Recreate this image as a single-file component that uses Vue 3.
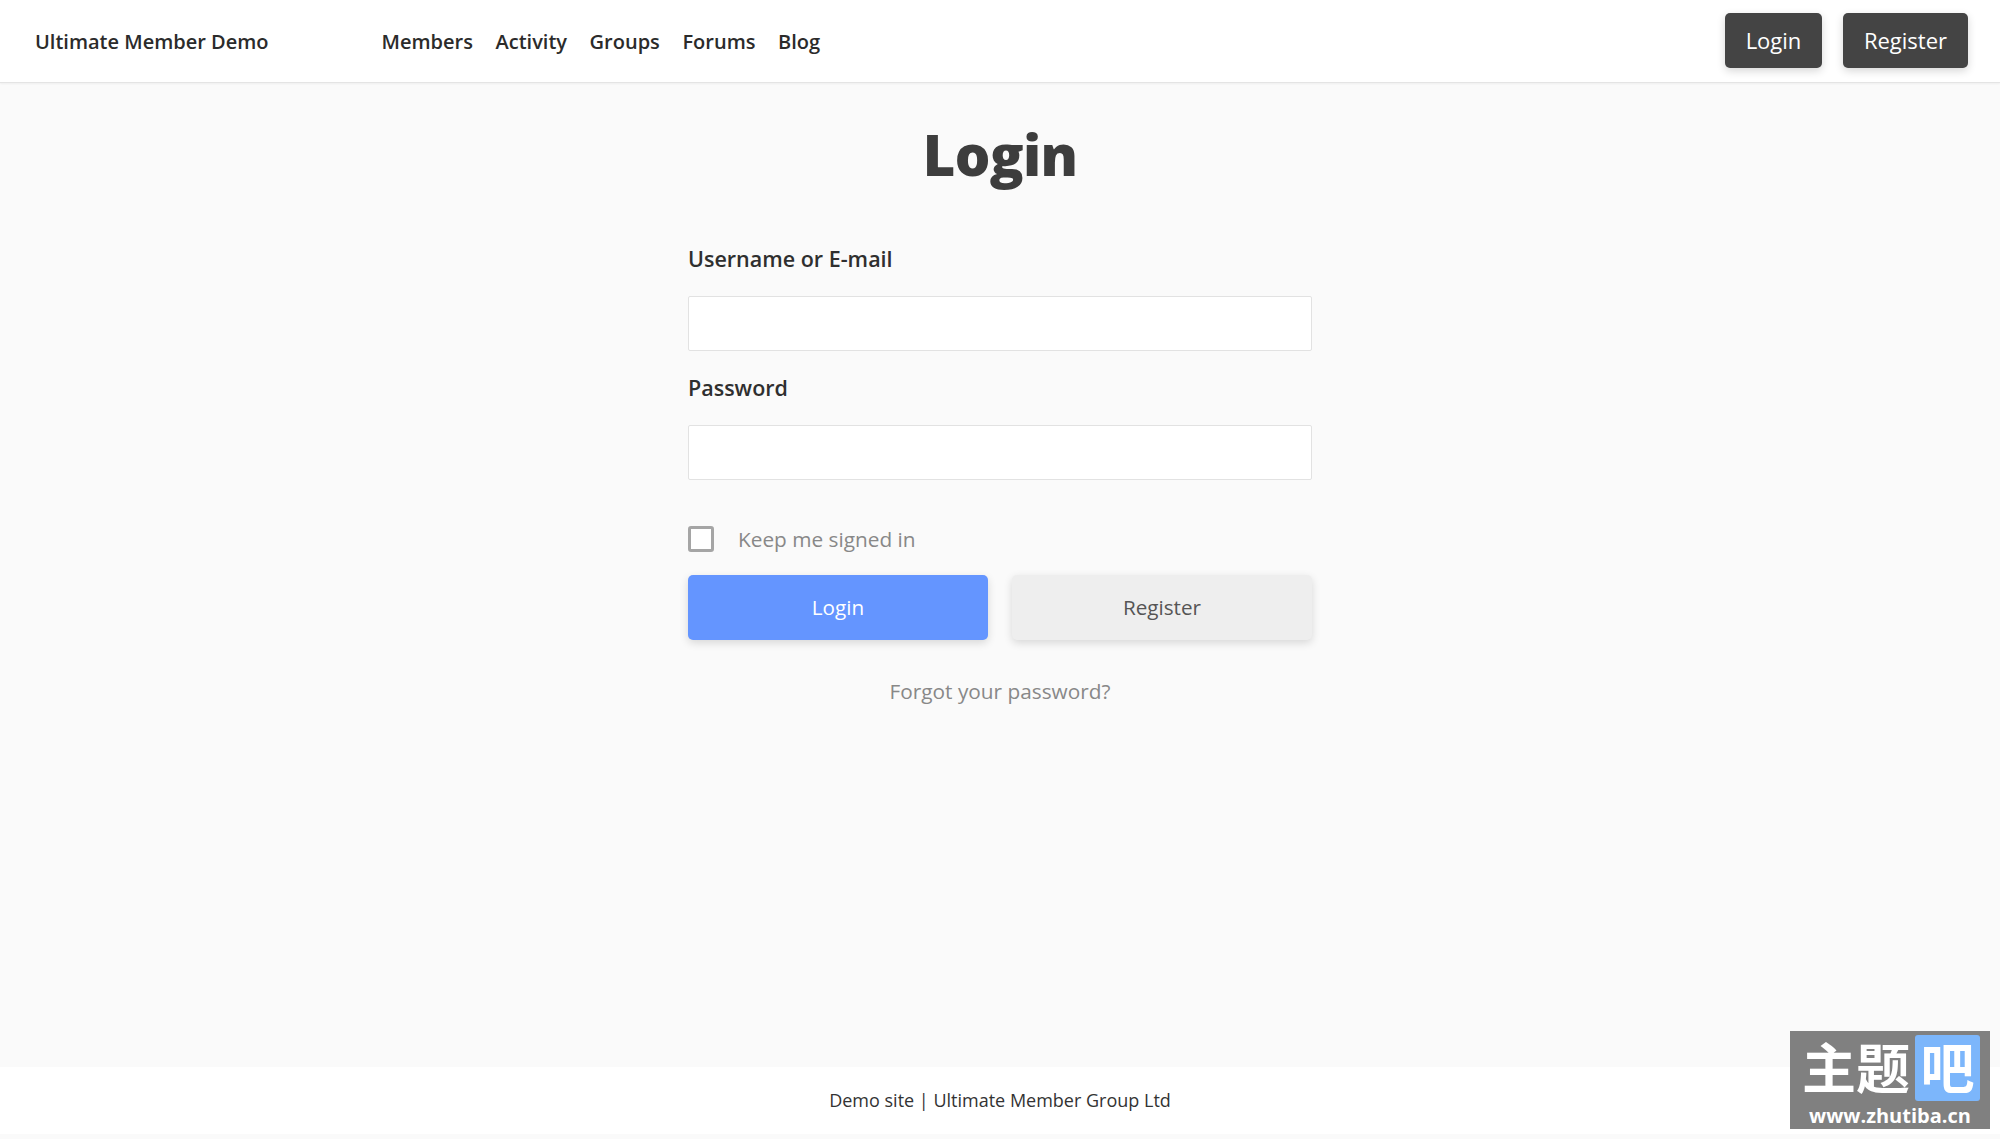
<script setup>
const links = ['Members', 'Activity', 'Groups', 'Forums', 'Blog']
</script>

<template>
  <div class="page">
    <header class="topbar">
      <div class="brand">Ultimate Member Demo</div>
      <nav class="nav">
        <a v-for="l in links" :key="l" class="nav-link">{{ l }}</a>
      </nav>
      <div class="actions">
        <button class="dark-btn login-btn">Login</button>
        <button class="dark-btn reg-btn">Register</button>
      </div>
    </header>
    <main class="main">
      <h1 class="title">Login</h1>
      <form class="form" @submit.prevent>
        <label class="label">Username or E-mail</label>
        <input class="input" type="text" />
        <label class="label second">Password</label>
        <input class="input" type="password" />
        <div class="keep">
          <span class="check"></span>
          <span>Keep me signed in</span>
        </div>
        <div class="btns">
          <button class="btn primary">Login</button>
          <button class="btn secondary">Register</button>
        </div>
        <div class="forgot">Forgot your password?</div>
      </form>
    </main>
    <footer class="footer">Demo site | Ultimate Member Group Ltd</footer>
    <div class="mark">
      <div class="mark-top">
        <span class="mark-cn">主题</span>
        <span class="mark-box">吧</span>
      </div>
      <div class="mark-url">www.zhutiba.cn</div>
    </div>
  </div>
</template>

<style>
html, body { margin: 0; background: #fafafa; }
</style>

<style scoped>
.page {
  position: relative;
  height: 1139px;
  display: flex;
  flex-direction: column;
  overflow: hidden;
  background: #fafafa;
  font-family: "Open Sans", "Noto Sans", sans-serif;
}
.topbar {
  box-sizing: border-box;
  height: 83px;
  flex: none;
  display: flex;
  align-items: center;
  padding: 0 32px 0 35px;
  background: #fff;
  border-bottom: 1px solid #e4e4e4;
  box-shadow: 0 1px 2px rgba(0, 0, 0, 0.05);
}
.brand {
  width: 346.5px;
  font-size: 20px;
  font-weight: 600;
  color: #2b2b2b;
}
.nav { display: flex; gap: 22.6px; }
.nav-link {
  font-size: 20px;
  font-weight: 600;
  color: #2b2b2b;
}
.actions { margin-left: auto; display: flex; gap: 21px; margin-bottom: 1px; }
.dark-btn {
  box-sizing: border-box;
  height: 55px;
  border: 0;
  border-radius: 5px;
  background: #444;
  color: #fff;
  font: 400 22px "Open Sans", sans-serif;
  box-shadow: 0 3px 8px rgba(0, 0, 0, 0.16);
  padding: 0 0 2px;
}
.login-btn { width: 97px; }
.reg-btn { width: 125px; }
.main {
  flex: 1;
  display: flex;
  flex-direction: column;
  align-items: center;
}
.title {
  margin: 27px 0 0;
  height: 88px;
  line-height: 88px;
  font-size: 56px;
  font-weight: 800;
  color: #3d3d3d;
  letter-spacing: -0.7px;
}
.form {
  width: 624px;
  margin-top: 47px;
  display: flex;
  flex-direction: column;
}
.label {
  height: 28px;
  line-height: 28px;
  font-size: 21.5px;
  font-weight: 600;
  color: #2f2f2f;
  margin-bottom: 23px;
}
.label.second { margin-top: 23px; }
.input {
  box-sizing: border-box;
  width: 100%;
  height: 55px;
  margin: 0;
  border: 1px solid #e2e2e2;
  border-radius: 2px;
  background: #fff;
  outline: none;
}
.keep {
  margin-top: 45px;
  height: 28px;
  display: flex;
  align-items: center;
  gap: 24px;
  font-size: 20.8px;
  color: #888;
}
.check {
  box-sizing: border-box;
  width: 26px;
  height: 26px;
  border: 3px solid #a5a5a5;
  border-radius: 3px;
  background: #fff;
}
.btns {
  margin-top: 22px;
  display: flex;
  justify-content: space-between;
}
.btn {
  box-sizing: border-box;
  width: 300px;
  height: 65px;
  border: 0;
  border-radius: 5px;
  font: 400 20.7px "Open Sans", sans-serif;
  padding: 0 0 1px;
}
.primary {
  background: #6495ff;
  color: #fff;
  box-shadow: 0 3px 8px rgba(0, 0, 0, 0.14);
}
.secondary {
  background: #eee;
  color: #555;
  box-shadow: 0 3px 8px rgba(0, 0, 0, 0.14);
}
.forgot {
  margin-top: 37px;
  text-align: center;
  font-size: 20.8px;
  line-height: 28px;
  color: #888;
}
.footer {
  flex: none;
  box-sizing: border-box;
  height: 67px;
  margin-bottom: 5px;
  padding-bottom: 2px;
  background: #fff;
  display: flex;
  align-items: center;
  justify-content: center;
  font-size: 18px;
  color: #333;
}
.mark {
  position: absolute;
  left: 1790px;
  top: 1031px;
  width: 200px;
  height: 98px;
  background: #808080;
  color: #fff;
}
.mark-top {
  display: flex;
  height: 70px;
  padding: 4px 10px 0 12px;
  box-sizing: border-box;
  justify-content: space-between;
  align-items: flex-start;
}
.mark-cn {
  font: 700 54px/62px "Noto Sans CJK SC", sans-serif;
  white-space: nowrap;
}
.mark-box {
  width: 65px;
  height: 66px;
  border-radius: 3px;
  background: #7cb6fb;
  font: 700 54px/62px "Noto Sans CJK SC", sans-serif;
  text-align: center;
  flex: none;
}
.mark-url {
  margin-top: 3px;
  text-align: center;
  font: 700 20px/24px "Open Sans", sans-serif;
}
</style>
